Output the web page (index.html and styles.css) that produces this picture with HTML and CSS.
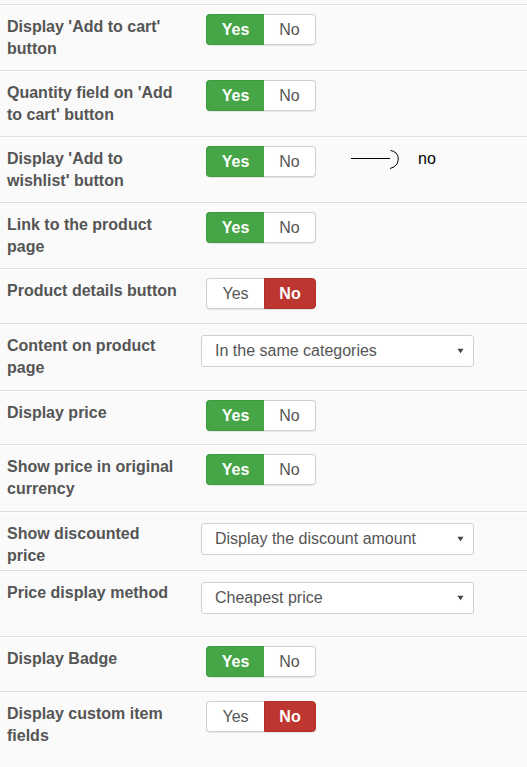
FILE: index.html
```html
<!DOCTYPE html>
<html>
<head>
<meta charset="utf-8">
<link rel="stylesheet" href="styles.css">
</head>
<body>
<div class="form">
  <div class="row">
    <div class="label">Display 'Add to cart' button</div>
    <div class="controls"><div class="toggle"><span class="opt opt-yes is-yes">Yes</span><span class="opt opt-no">No</span></div></div>
  </div>
  <div class="row">
    <div class="label">Quantity field on 'Add to cart' button</div>
    <div class="controls"><div class="toggle"><span class="opt opt-yes is-yes">Yes</span><span class="opt opt-no">No</span></div></div>
  </div>
  <div class="row row-note">
    <div class="label">Display 'Add to wishlist' button</div>
    <div class="controls"><div class="toggle"><span class="opt opt-yes is-yes">Yes</span><span class="opt opt-no">No</span></div></div>
    <div class="note">
      <svg class="note-arrow" width="52" height="22" viewBox="0 0 52 22"><path d="M1 9.5 H40" stroke="#000" stroke-width="1" fill="none"/><path d="M40.5 1.5 Q44 2 46 4 Q50 8 47 15 Q45 18.5 40 19.5" stroke="#000" stroke-width="1" fill="none"/></svg>
      <span class="note-text">no</span>
    </div>
  </div>
  <div class="row">
    <div class="label">Link to the product page</div>
    <div class="controls"><div class="toggle"><span class="opt opt-yes is-yes">Yes</span><span class="opt opt-no">No</span></div></div>
  </div>
  <div class="row">
    <div class="label">Product details button</div>
    <div class="controls"><div class="toggle"><span class="opt opt-yes">Yes</span><span class="opt opt-no is-no">No</span></div></div>
  </div>
  <div class="row row-plus">
    <div class="label">Content on product page</div>
    <div class="controls"><div class="select"><span>In the same categories</span><svg class="caret" width="8" height="6" viewBox="0 0 8 6"><polygon points="0.5,0.5 7.5,0.5 4,5.5" fill="#444"/></svg></div></div>
  </div>
  <div class="row row-minus">
    <div class="label">Display price</div>
    <div class="controls"><div class="toggle"><span class="opt opt-yes is-yes">Yes</span><span class="opt opt-no">No</span></div></div>
  </div>
  <div class="row row-plus">
    <div class="label">Show price in original currency</div>
    <div class="controls"><div class="toggle"><span class="opt opt-yes is-yes">Yes</span><span class="opt opt-no">No</span></div></div>
  </div>
  <div class="row row-short">
    <div class="label">Show discounted price</div>
    <div class="controls"><div class="select"><span>Display the discount amount</span><svg class="caret" width="8" height="6" viewBox="0 0 8 6"><polygon points="0.5,0.5 7.5,0.5 4,5.5" fill="#444"/></svg></div></div>
  </div>
  <div class="row row-tall">
    <div class="label">Price display method</div>
    <div class="controls"><div class="select"><span>Cheapest price</span><svg class="caret" width="8" height="6" viewBox="0 0 8 6"><polygon points="0.5,0.5 7.5,0.5 4,5.5" fill="#444"/></svg></div></div>
  </div>
  <div class="row">
    <div class="label">Display Badge</div>
    <div class="controls"><div class="toggle"><span class="opt opt-yes is-yes">Yes</span><span class="opt opt-no">No</span></div></div>
  </div>
  <div class="row">
    <div class="label">Display custom item fields</div>
    <div class="controls"><div class="toggle"><span class="opt opt-yes">Yes</span><span class="opt opt-no is-no">No</span></div></div>
  </div>
</div>
</body>
</html>
```
FILE: styles.css
```css
html, body {
  margin: 0;
  background: #fafafa;
}
body {
  font-family: "Liberation Sans", Arial, sans-serif;
  padding-top: 4px;
  height: 763px;
  overflow: hidden;
}
.row {
  display: flex;
  align-items: flex-start;
  border-top: 1px solid #dedede;
  box-shadow: inset 0 1px 0 #fff;
  padding: 10px 0 10px 7px;
}
.row-plus { padding-bottom: 11px; }
.row-minus { padding-bottom: 9px; }
.row-short { padding-bottom: 3px; }
.row-tall { padding-bottom: 21px; }
.row-note { position: relative; }
.label {
  flex: none;
  width: 170px;
  margin-top: 1px;
  font-weight: bold;
  font-size: 16px;
  line-height: 22px;
  color: #555;
}
.controls {
  margin-left: 29px;
  min-height: 34px;
}
.toggle {
  display: flex;
  height: 31px;
  margin-top: -1px;
  border-radius: 4px;
  box-shadow: 0 1px 1px rgba(0, 0, 0, 0.08);
}
.opt {
  box-sizing: border-box;
  display: flex;
  align-items: center;
  justify-content: center;
  height: 31px;
  font-size: 16px;
  color: #555;
  background: #fff;
  border: 1px solid #cfcfcf;
}
.opt-yes {
  width: 58px;
  border-radius: 4px 0 0 4px;
  border-right: 0;
}
.opt-no {
  width: 52px;
  border-radius: 0 4px 4px 0;
}
.opt-yes.is-yes + .opt-no { border-left: 0; }
.is-yes {
  background: #46a546;
  border-color: #3f9a3f;
  color: #fff;
  font-weight: bold;
}
.is-no {
  background: #bd362f;
  border-color: #ad302a;
  color: #fff;
  font-weight: bold;
}
.select {
  box-sizing: border-box;
  display: flex;
  align-items: center;
  justify-content: space-between;
  width: 273px;
  height: 32px;
  margin-left: -5px;
  margin-top: 1px;
  padding: 0 9px 0 13px;
  background: #fff;
  border: 1px solid #d0d0d0;
  border-radius: 3px;
  font-size: 16px;
  color: #555;
}
.caret { display: block; width: 7px; height: 6px; }
.note {
  position: absolute;
  left: 350px;
  top: 12px;
  display: flex;
  align-items: flex-start;
}
.note-arrow { display: block; }
.note-text {
  margin-left: 16px;
  margin-top: 1px;
  font-size: 16px;
  line-height: 18px;
  color: #000;
}
```
